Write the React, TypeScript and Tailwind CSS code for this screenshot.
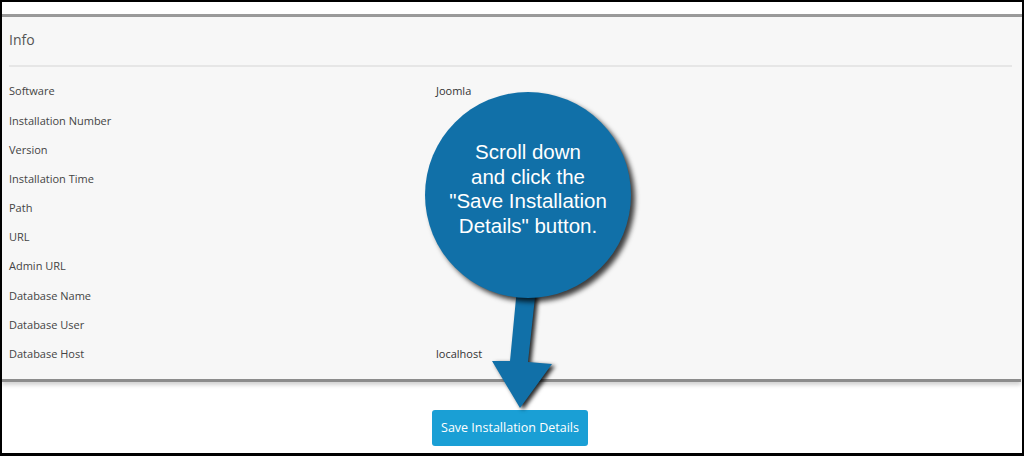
export default function App() {
  const rows: [string, string][] = [
    ["Software", "Joomla"],
    ["Installation Number", ""],
    ["Version", ""],
    ["Installation Time", ""],
    ["Path", ""],
    ["URL", ""],
    ["Admin URL", ""],
    ["Database Name", ""],
    ["Database User", ""],
    ["Database Host", "localhost"],
  ];

  return (
    <div className="w-[1024px] h-[456px] border-2 border-b-[3px] border-black bg-black font-['Open_Sans',sans-serif]">
      <div className="relative h-full bg-white flex flex-col">
        {/* top strip */}
        <div className="h-[12px]" />
        <div className="h-[3px] bg-[#9a9a9a]" />

        {/* Info panel */}
        <div className="bg-[#f7f7f7] mr-[1px] pl-[7px] border-b-[3px] border-[#8c8c8c] shadow-[0_3px_4px_rgba(0,0,0,0.18)]">
          <div className="pt-[13px] pb-[15px] text-[14px] leading-[20px] text-[#555]">Info</div>
          <div className="h-[2px] bg-[#e6e6e6] mr-[9px]" />
          <div className="mt-[10px] pb-[10px]">
            {rows.map(([label, value]) => (
              <div key={label} className="grid grid-cols-[427px_1fr] h-[29.2px] items-center text-[11px] text-[#444]">
                <span>{label}</span>
                <span className="text-[#333]">{value}</span>
              </div>
            ))}
          </div>
        </div>

        {/* Button */}
        <div className="flex justify-center mt-[28px] pr-[4px]">
          <button className="w-[156px] h-[36px] rounded-[3px] bg-[#1a9fd5] text-white text-[12.5px]">
            Save Installation Details
          </button>
        </div>

        {/* Callout arrow */}
        <svg
          className="absolute left-[478px] top-[280px] drop-shadow-[3px_2px_2px_rgba(0,0,0,0.85)]"
          width="90"
          height="135"
          viewBox="0 0 90 135"
        >
          <polygon points="37,6 56,6 48,80 72,82 40,126 12,79 30,79" fill="#1170a8" />
        </svg>

        {/* Callout bubble */}
        <div className="absolute left-[423px] top-[90px] w-[206px] h-[206px] rounded-full bg-[#1170a8] shadow-[4px_4px_5px_rgba(0,0,0,0.75)] flex items-center justify-center pb-[12px] text-center text-white text-[20.5px] leading-[24.5px] font-['Liberation_Sans',Arial,sans-serif]">
          <div>
            Scroll down
            <br />
            and click the
            <br />
            "Save Installation
            <br />
            Details" button.
          </div>
        </div>
      </div>
    </div>
  );
}
